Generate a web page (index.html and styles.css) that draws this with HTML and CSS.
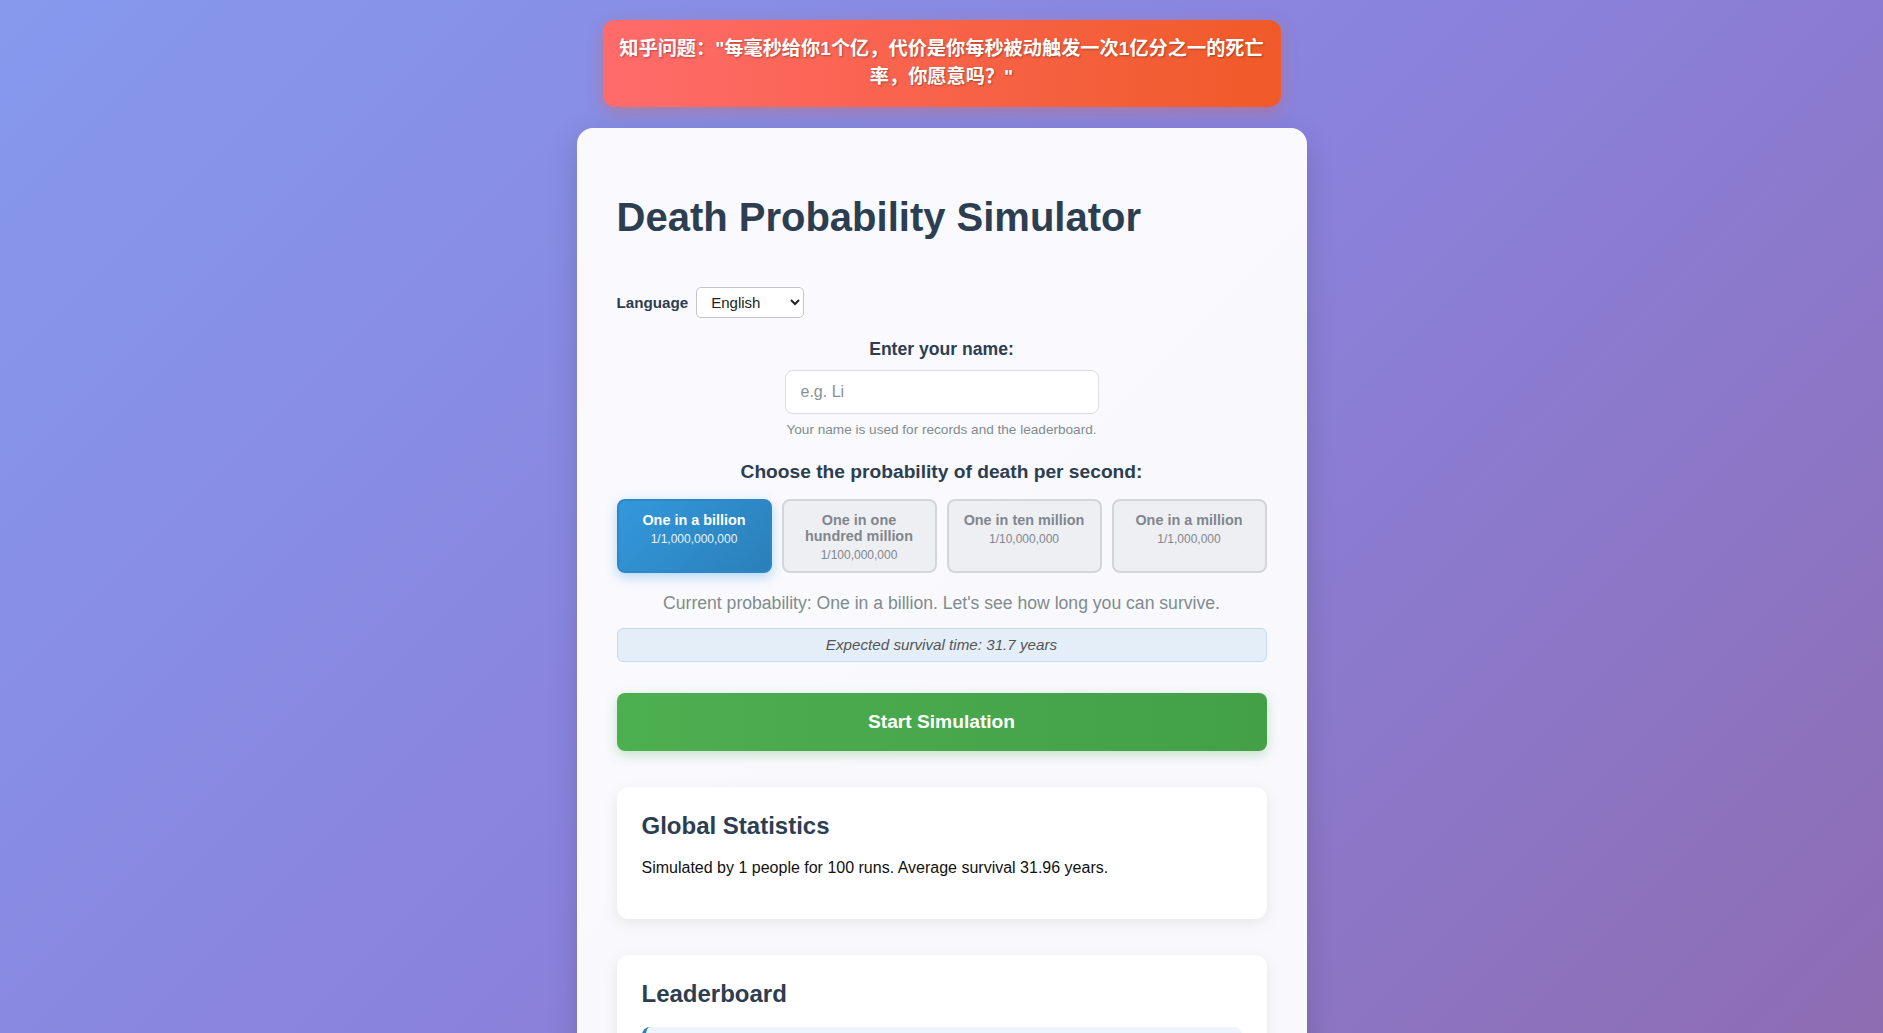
FILE: index.html
```html
<!DOCTYPE html>
<html lang="en">
<head>
    <meta charset="UTF-8">
    <meta name="viewport" content="width=device-width, initial-scale=1.0">
    <title>Death Probability Simulator</title>
    <link rel="stylesheet" href="styles.css">
</head>
<body>
    <div class="question-banner">知乎问题："每毫秒给你1个亿，代价是你每秒被动触发一次1亿分之一的死亡率，你愿意吗？"</div>

    <div class="container">
        <h1>Death Probability Simulator</h1>

        <div class="lang-row">
            <label for="langSelect">Language</label>
            <select id="langSelect">
                <option value="en" selected>English</option>
                <option value="zh">中文</option>
            </select>
        </div>

        <div class="name-section">
            <label for="playerName">Enter your name:</label>
            <input type="text" id="playerName" placeholder="e.g. Li">
            <p class="hint">Your name is used for records and the leaderboard.</p>
        </div>

        <h3 class="choose-title">Choose the probability of death per second:</h3>
        <div class="prob-options">
            <button class="prob-btn active">
                <span class="prob-name">One in a billion</span>
                <span class="prob-value">1/1,000,000,000</span>
            </button>
            <button class="prob-btn">
                <span class="prob-name">One in one hundred million</span>
                <span class="prob-value">1/100,000,000</span>
            </button>
            <button class="prob-btn">
                <span class="prob-name">One in ten million</span>
                <span class="prob-value">1/10,000,000</span>
            </button>
            <button class="prob-btn">
                <span class="prob-name">One in a million</span>
                <span class="prob-value">1/1,000,000</span>
            </button>
        </div>

        <p class="current-prob">Current probability: One in a billion. Let's see how long you can survive.</p>
        <div class="expected">Expected survival time: 31.7 years</div>

        <button class="start-btn">Start Simulation</button>

        <div class="panel">
            <h2>Global Statistics</h2>
            <p>Simulated by 1 people for 100 runs. Average survival 31.96 years.</p>
        </div>

        <div class="panel">
            <h2>Leaderboard</h2>
            <ul class="leaderboard">
                <li><span class="rank">1</span> Li <span class="score">31.96 years</span></li>
            </ul>
        </div>
    </div>
</body>
</html>
```

FILE: styles.css
```css
/* General Styling */
body {
    font-family: "Liberation Sans", Arial, "Noto Sans CJK SC", sans-serif;
    margin: 0;
    padding: 20px;
    min-height: 100vh;
    box-sizing: border-box;
    background: linear-gradient(135deg, #8599ed 0%, #8a82dd 50%, #8e6cb2 100%) fixed;
}

.question-banner {
    width: 678px;
    box-sizing: border-box;
    margin: 0 auto 21px;
    padding: 15px 15px 16px;
    background: linear-gradient(to right, #ff6b6b, #f05a28);
    color: white;
    font-size: 19.2px;
    font-weight: bold;
    line-height: 28px;
    text-align: center;
    border-radius: 12px;
    text-shadow: 1px 1px 2px rgba(0, 0, 0, 0.3);
    box-shadow: 0 4px 15px rgba(238, 90, 36, 0.35);
}

.container {
    width: 730px;
    box-sizing: border-box;
    margin: 0 auto;
    padding: 40px;
    background: rgba(255, 255, 255, 0.95);
    border-radius: 16px;
    box-shadow: 0 10px 30px rgba(0, 0, 0, 0.15);
}

h1 {
    color: #2c3e50;
    font-size: 40px;
    margin: 27px 0 47px;
}

/* Language switch */
.lang-row {
    display: flex;
    align-items: center;
    gap: 8px;
    margin-bottom: 21px;
}
.lang-row label {
    font-size: 15.2px;
    font-weight: bold;
    color: #2c3e50;
}
.lang-row select {
    font-family: inherit;
    font-size: 15px;
    height: 31px;
    width: 108px;
    padding: 0 10px;
    border: 1px solid #c4c4cc;
    border-radius: 5px;
    background: white;
    color: #222;
}

/* Name input */
.name-section {
    text-align: center;
}
.name-section label {
    display: block;
    font-size: 17.6px;
    font-weight: bold;
    color: #2c3e50;
    margin-bottom: 10px;
}
.name-section input {
    width: 314px;
    height: 44px;
    box-sizing: border-box;
    padding: 0 15px;
    font-family: inherit;
    font-size: 16px;
    border: 1px solid #dcdde2;
    border-radius: 8px;
    outline: none;
    background: white;
}
.name-section input::placeholder {
    color: #8a8f96;
}
.hint {
    font-size: 13.6px;
    color: #7f8c8d;
    margin: 8px 0 0;
}

/* Probability choice */
.choose-title {
    text-align: center;
    font-size: 19.2px;
    color: #2c3e50;
    margin: 24px 0 16px;
}
.prob-options {
    display: grid;
    grid-template-columns: repeat(4, 1fr);
    gap: 10px;
}
.prob-btn {
    display: flex;
    flex-direction: column;
    align-items: center;
    justify-content: flex-start;
    height: 74px;
    padding: 11px 12px;
    box-sizing: border-box;
    font-family: inherit;
    background: #eeeff3;
    border: 2px solid #d3d5db;
    border-radius: 8px;
    color: #80868d;
    cursor: pointer;
}
.prob-name {
    font-size: 14.4px;
    font-weight: bold;
    line-height: 16px;
}
.prob-value {
    font-size: 12px;
    line-height: 16px;
    margin-top: 3px;
}
.prob-btn.active {
    background: linear-gradient(135deg, #3498db, #2980b9);
    border-color: #2e86c8;
    color: white;
    box-shadow: 0 4px 12px rgba(52, 152, 219, 0.35);
}
.prob-btn.active .prob-value {
    opacity: 0.9;
}

.current-prob {
    text-align: center;
    font-size: 17.6px;
    color: #7f8c8d;
    margin: 20px 0 14px;
}
.expected {
    text-align: center;
    font-size: 15.2px;
    font-style: italic;
    color: #555;
    background: #e4eef9;
    border: 1px solid #c5d9ef;
    border-radius: 6px;
    height: 34px;
    line-height: 32px;
    box-sizing: border-box;
}

.start-btn {
    display: block;
    width: 100%;
    height: 58px;
    margin: 31px 0 36px;
    background: linear-gradient(to right, #4caf50, #43a047);
    color: white;
    border: none;
    border-radius: 8px;
    font-family: inherit;
    font-size: 19.2px;
    font-weight: bold;
    cursor: pointer;
    box-shadow: 0 4px 12px rgba(76, 175, 80, 0.3);
}

/* Stats and leaderboard panels */
.panel {
    background: white;
    border-radius: 12px;
    padding: 25px 25px 26px;
    margin-bottom: 36px;
    box-shadow: 0 4px 15px rgba(0, 0, 0, 0.08);
}
.panel h2 {
    color: #2c3e50;
    font-size: 24px;
    margin: 0 0 19px;
    line-height: 28px;
}
.panel p {
    font-size: 16px;
    color: #111;
    margin: 0 0 16px;
}
.leaderboard {
    list-style: none;
    padding: 0;
    margin: 0;
}
.leaderboard li {
    background: #eef4fb;
    border-left: 4px solid #2c7fb8;
    border-radius: 8px;
    padding: 12px 15px;
    font-size: 15px;
    color: #2c3e50;
}
.leaderboard .rank {
    font-weight: bold;
    margin-right: 8px;
}
.leaderboard .score {
    float: right;
    color: #555;
}
```
